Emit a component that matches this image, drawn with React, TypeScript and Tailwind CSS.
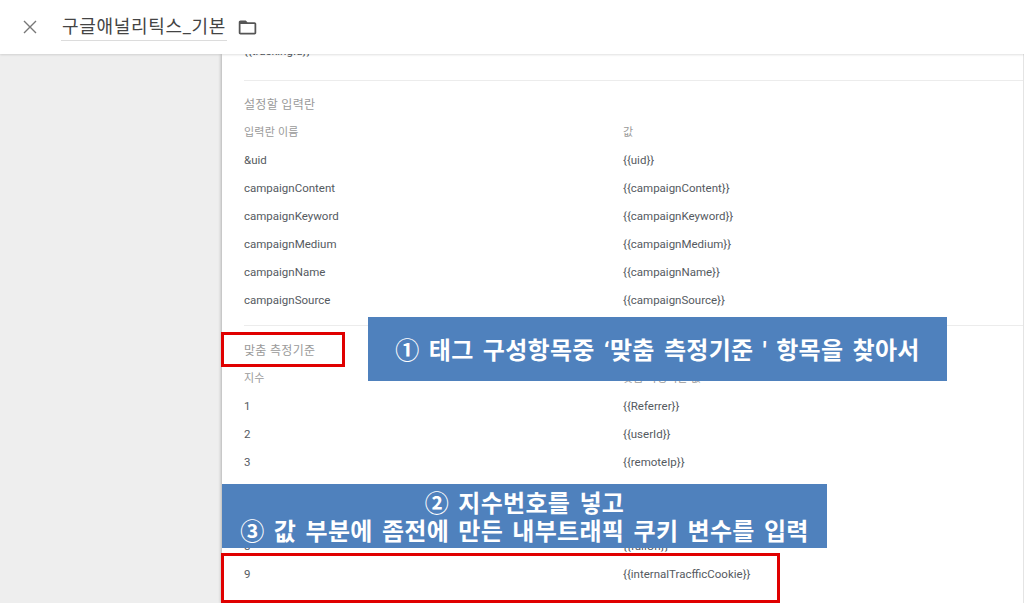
const font = '[font-family:Roboto,"Noto_Sans_CJK_KR",sans-serif]'

const fieldRows = [
  ['&uid', '{{uid}}'],
  ['campaignContent', '{{campaignContent}}'],
  ['campaignKeyword', '{{campaignKeyword}}'],
  ['campaignMedium', '{{campaignMedium}}'],
  ['campaignName', '{{campaignName}}'],
  ['campaignSource', '{{campaignSource}}'],
]

const dimensionRows = [
  ['1', '{{Referrer}}'],
  ['2', '{{userId}}'],
  ['3', '{{remoteIp}}'],
  ['6', '{{clientId}}'],
  ['7', '{{pagePath}}'],
  ['8', '{{fullUrl}}'],
  ['9', '{{internalTracfficCookie}}'],
]

function Row({ left, right }: { left: string; right?: string }) {
  return (
    <div className="flex h-[28px] items-center text-[11.5px] text-[#555a5f]">
      <div className="w-[379px] shrink-0">{left}</div>
      <div>{right}</div>
    </div>
  )
}

function SectionTitle({ children }: { children: string }) {
  return <div className="flex h-[28px] items-center text-[12px] tracking-[0.3px] text-[#9a9a9a]">{children}</div>
}

function ColumnHeader({ left, right }: { left: string; right: string }) {
  return (
    <div className="flex h-[28px] items-center text-[11px] tracking-[0.2px] text-[#9a9a9a]">
      <div className="w-[379px] shrink-0">{left}</div>
      <div>{right}</div>
    </div>
  )
}

export default function App() {
  return (
    <div className={`relative flex h-[603px] w-[1024px] flex-col overflow-hidden bg-[#eeeeee] ${font}`}>
      <header className="relative z-10 flex h-[54px] shrink-0 items-center bg-white pl-[18px] shadow-[0_1px_2px_rgba(0,0,0,0.12)]">
        <svg viewBox="0 0 24 24" className="h-[24px] w-[24px] text-[#777777]" fill="none" stroke="currentColor" strokeWidth="1.4">
          <path d="M6 6l12 12M18 6L6 18" />
        </svg>
        <div className="ml-[19px] flex h-[28px] w-[166px] items-center justify-center whitespace-nowrap border-b border-[#dcdcdc] text-[18px] tracking-[0.7px] text-[#444444]">
          구글애널리틱스_기본
        </div>
        <svg viewBox="0 0 24 24" className="ml-[10px] h-[21px] w-[21px] text-[#555555]" fill="currentColor">
          <path d="M20 6h-8l-2-2H4c-1.1 0-1.99.9-1.99 2L2 18c0 1.1.9 2 2 2h16c1.1 0 2-.9 2-2V8c0-1.1-.9-2-2-2zm0 12H4V8h16v10z" />
        </svg>
      </header>

      <div className="flex min-h-0 flex-1">
        <aside className="w-[222px] shrink-0" />
        <main className="min-w-0 flex-1 overflow-hidden border-r border-[#e4e4e4] bg-white pl-[22px] shadow-[-1px_0_3px_rgba(0,0,0,0.25)]">
          <div className="-mt-[16px]">
            <Row left="{{trackingId}}" />
          </div>
          <div className="mt-[14px] border-t border-[#ececec] pt-[10px]">
            <SectionTitle>설정할 입력란</SectionTitle>
            <ColumnHeader left="입력란 이름" right="값" />
            {fieldRows.map(([name, value]) => (
              <Row key={name} left={name} right={value} />
            ))}
          </div>
          <div className="mt-[10px] border-t border-[#ececec] pt-[11px]">
            <SectionTitle>맞춤 측정기준</SectionTitle>
            <ColumnHeader left="지수" right="맞춤 측정기준 값" />
            {dimensionRows.map(([name, value]) => (
              <Row key={name} left={name} right={value} />
            ))}
          </div>
        </main>
      </div>

      <div className="absolute left-[368px] top-[317px] z-20 flex h-[64px] w-[579px] items-center justify-center whitespace-nowrap bg-[#4f81bd] pt-[3px] text-[24px] font-bold tracking-[0.3px] text-white [word-spacing:3px]">
        ① 태그 구성항목중 ‘맞춤 측정기준 ' 항목을 찾아서
      </div>
      <div className="absolute left-[222px] top-[484px] z-20 flex h-[64px] w-[605px] flex-col items-center justify-center whitespace-nowrap bg-[#4f81bd] pt-[4px] text-[24px] font-bold leading-[28px] tracking-[0.3px] text-white [word-spacing:3px]">
        <div>② 지수번호를 넣고</div>
        <div>③ 값 부분에 좀전에 만든 내부트래픽 쿠키 변수를 입력</div>
      </div>

      <div className="absolute left-[221px] top-[332px] z-30 h-[35px] w-[124px] border-[3px] border-[#e00000]" />
      <div className="absolute left-[221px] top-[553px] z-30 h-[50px] w-[559px] border-[3px] border-[#e00000]" />
    </div>
  )
}
